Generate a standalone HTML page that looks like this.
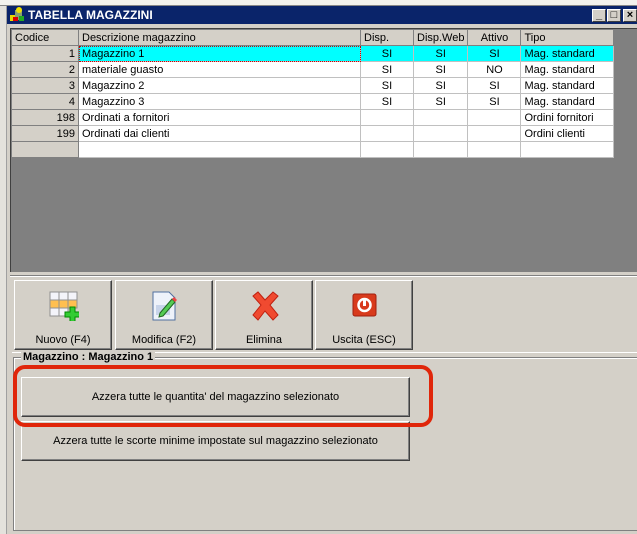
<!DOCTYPE html>
<html><head><meta charset="utf-8"><style>
*{margin:0;padding:0;box-sizing:border-box}
body{width:637px;height:534px;overflow:hidden;background:#d4d0c8;position:relative;font-family:"Liberation Sans",sans-serif;font-size:11px;color:#000}
.a{position:absolute}
.top{left:0;top:0;width:637px;height:6px;background:#f4f3ee;border-bottom:1px solid #888}
.lft{left:0;top:6px;width:7px;height:528px;background:#e4e2dc;border-right:1px solid #a0a0a0}
.title{left:7px;top:6px;width:630px;height:18px;background:#0a246a;color:#fff;font-weight:bold;font-size:12px;line-height:18px;padding-left:21px}
.tb{top:9px;width:14px;height:13px;background:#d4d0c8;border:1px solid;border-color:#fff #404040 #404040 #fff;color:#000;font-size:11px;line-height:11px;text-align:center;font-weight:bold}
.gray{left:10px;top:28px;width:627px;height:244px;background:#808080;border-top:1px solid #404040;border-left:1px solid #404040}
table{position:absolute;left:11px;top:29px;border-collapse:collapse;background:#fff}
td{height:16px;border:1px solid #c0c0c0;padding:0 3px;white-space:nowrap;line-height:14px}
td.h{background:#d4d0c8;border-color:#808080}
td.c{background:#d4d0c8;text-align:right;border-color:#808080}
tr.sel td:not(.c){background:#00ffff}
.ce{text-align:center}
.btn{background:#d4d0c8;border:1px solid;border-color:#fff #404040 #404040 #fff;box-shadow:inset -1px -1px 0 #808080}
.tool{top:280px;width:98px;height:70px;text-align:center}
.tool span{position:absolute;left:0;right:0;top:53px}
.tool svg{position:absolute;left:34px;top:10px}
.grp{left:13px;top:357px;width:630px;height:174px;border:1px solid #808080;box-shadow:1px 1px 0 #fff inset}
.big{left:21px;width:389px;height:40px;text-align:center;line-height:38px}
</style></head><body>
<div class="a top"></div>
<div class="a lft"></div>
<div class="a title">TABELLA MAGAZZINI</div>
<svg class="a" style="left:9px;top:7px" width="17" height="16"><rect x="1" y="8" width="6" height="6" fill="#e8d800"/><rect x="6" y="3" width="7" height="10" fill="#8aa070"/><circle cx="10" cy="3" r="3" fill="#f0e000"/><rect x="4" y="10" width="5" height="4" fill="#d00"/><rect x="10" y="9" width="5" height="5" fill="#2a2"/></svg>
<div class="a tb" style="left:592px">_</div>
<div class="a tb" style="left:607px">□</div>
<div class="a tb" style="left:623px">×</div>
<div class="a gray"></div>
<table>
<tr><td class="h" style="width:67px">Codice</td><td class="h" style="width:282px">Descrizione magazzino</td><td class="h" style="width:53px">Disp.</td><td class="h" style="width:53px">Disp.Web</td><td class="h ce" style="width:53px">Attivo</td><td class="h" style="width:93px">Tipo</td></tr>
<tr class="sel"><td class="c">1</td><td style="outline:1px dotted #c00;outline-offset:-1px">Magazzino 1</td><td class="ce">SI</td><td class="ce">SI</td><td class="ce">SI</td><td>Mag. standard</td></tr>
<tr><td class="c">2</td><td>materiale guasto</td><td class="ce">SI</td><td class="ce">SI</td><td class="ce">NO</td><td>Mag. standard</td></tr>
<tr><td class="c">3</td><td>Magazzino 2</td><td class="ce">SI</td><td class="ce">SI</td><td class="ce">SI</td><td>Mag. standard</td></tr>
<tr><td class="c">4</td><td>Magazzino 3</td><td class="ce">SI</td><td class="ce">SI</td><td class="ce">SI</td><td>Mag. standard</td></tr>
<tr><td class="c">198</td><td>Ordinati a fornitori</td><td></td><td></td><td></td><td>Ordini fornitori</td></tr>
<tr><td class="c">199</td><td>Ordinati dai clienti</td><td></td><td></td><td></td><td>Ordini clienti</td></tr>
<tr><td class="c"></td><td></td><td></td><td></td><td></td><td></td></tr>
</table>
<div class="a" style="left:10px;top:275px;width:627px;height:1px;background:#808080"></div>
<div class="a" style="left:10px;top:276px;width:627px;height:1px;background:#fff"></div>
<div class="a btn tool" style="left:14px"><svg width="30" height="30"><g stroke="#909090" fill="#f4f4fa"><rect x="1" y="1" width="9" height="8"/><rect x="10" y="1" width="9" height="8"/><rect x="19" y="1" width="9" height="8"/><rect x="1" y="9" width="9" height="8" fill="#ffbf50"/><rect x="10" y="9" width="9" height="8" fill="#ffbf50"/><rect x="19" y="9" width="9" height="8" fill="#ffbf50"/><rect x="1" y="17" width="9" height="8"/><rect x="10" y="17" width="9" height="8"/></g><path d="M21 16h5v5h5v5h-5v5h-5v-5h-5v-5h5z" fill="#3c3" stroke="#080"/></svg><span>Nuovo (F4)</span></div>
<div class="a btn tool" style="left:115px"><svg width="30" height="30"><path d="M3 1h16l6 6v22H3z" fill="#eef2fa" stroke="#5070a0"/><rect x="6" y="14" width="14" height="10" fill="#c8d4ea"/><path d="M10 22l12-14 3 3-12 14-4 1z" fill="#5c5" stroke="#262"/><path d="M22 8l2-2 3 3-2 2z" fill="#e44"/></svg><span>Modifica (F2)</span></div>
<div class="a btn tool" style="left:215px"><svg width="30" height="30"><path d="M3 5l5-4 7 8 8-8 5 4-8 9 8 10-5 5-8-9-7 9-5-5 8-10z" fill="#f04a30" stroke="#c02010"/></svg><span>Elimina</span></div>
<div class="a btn tool" style="left:315px"><svg width="30" height="30"><rect x="3" y="3" width="23" height="22" rx="2" fill="#d83a1c" stroke="#a02010"/><circle cx="14.5" cy="14" r="6" fill="none" stroke="#fff" stroke-width="2.5"/><rect x="13" y="7" width="3" height="8" fill="#fff"/></svg><span>Uscita (ESC)</span></div>
<div class="a" style="left:12px;top:352px;width:625px;height:1px;background:#fff"></div>
<div class="a grp"></div>
<div class="a" style="left:21px;top:351px;padding:0 2px;background:#d4d0c8;font-weight:bold;font-size:11px">Magazzino : Magazzino 1</div>
<div class="a btn big" style="top:377px">Azzera tutte le quantita' del magazzino selezionato</div>
<div class="a btn big" style="top:421px">Azzera tutte le scorte minime impostate sul magazzino selezionato</div>
<div class="a" style="left:13px;top:365px;width:420px;height:62px;border:4px solid #e0260a;border-radius:12px"></div>
</body></html>
